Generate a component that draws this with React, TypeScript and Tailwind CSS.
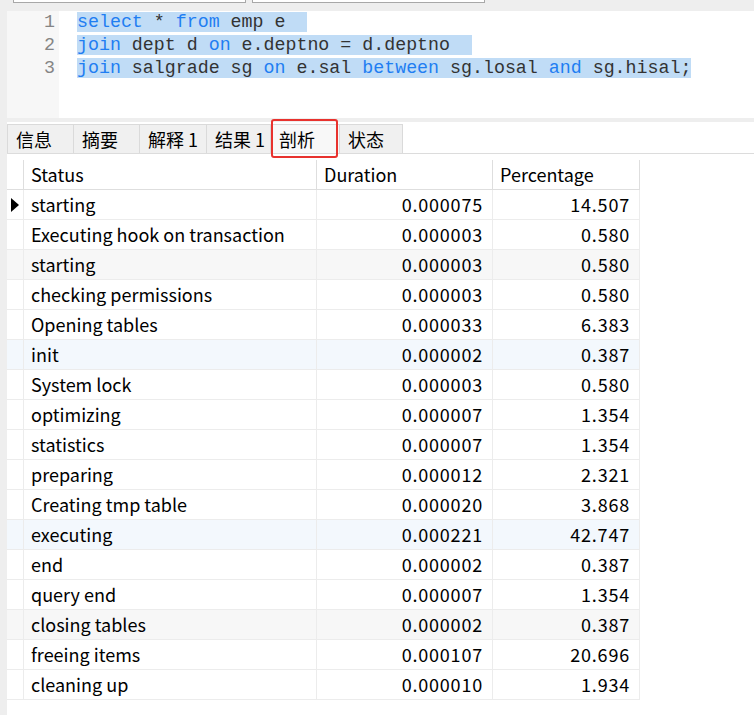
import React from "react";

const ROWS: { status: string; duration: string; pct: string; tint?: "gray" | "blue" }[] = [
  { status: "starting", duration: "0.000075", pct: "14.507" },
  { status: "Executing hook on transaction", duration: "0.000003", pct: "0.580" },
  { status: "starting", duration: "0.000003", pct: "0.580", tint: "gray" },
  { status: "checking permissions", duration: "0.000003", pct: "0.580" },
  { status: "Opening tables", duration: "0.000033", pct: "6.383" },
  { status: "init", duration: "0.000002", pct: "0.387", tint: "blue" },
  { status: "System lock", duration: "0.000003", pct: "0.580" },
  { status: "optimizing", duration: "0.000007", pct: "1.354" },
  { status: "statistics", duration: "0.000007", pct: "1.354" },
  { status: "preparing", duration: "0.000012", pct: "2.321" },
  { status: "Creating tmp table", duration: "0.000020", pct: "3.868" },
  { status: "executing", duration: "0.000221", pct: "42.747", tint: "blue" },
  { status: "end", duration: "0.000002", pct: "0.387" },
  { status: "query end", duration: "0.000007", pct: "1.354" },
  { status: "closing tables", duration: "0.000002", pct: "0.387", tint: "gray" },
  { status: "freeing items", duration: "0.000107", pct: "20.696" },
  { status: "cleaning up", duration: "0.000010", pct: "1.934" },
];

const TABS = [
  { label: "信息", w: "w-[67px]" },
  { label: "摘要", w: "w-[66px]" },
  { label: "解释 1", w: "w-[67px]" },
  { label: "结果 1", w: "w-[64px]" },
  { label: "剖析", w: "w-[69px]", active: true },
  { label: "状态", w: "w-[63px]" },
];

const K = ({ children }: { children: React.ReactNode }) => (
  <span className="text-[#1f7ef2]">{children}</span>
);

const UI_FONT = "font-['Noto_Sans_CJK_SC','Noto_Sans',sans-serif]";

export default function App() {
  return (
    <div className={`w-[754px] h-[715px] bg-white flex flex-col overflow-hidden ${UI_FONT}`}>
      {/* top toolbar remnants */}
      <div className="h-[11px] bg-[#eeeeee] flex gap-[6px] pl-[13px] shrink-0">
        <div className="w-[233px] h-[3px] bg-white border-x border-b border-[#a8a8a8]" />
        <div className="w-[233px] h-[3px] bg-white border-x border-b border-[#a8a8a8]" />
      </div>

      <div className="flex flex-1 min-h-0">
        <div className="w-[7px] bg-[#eeeeee] shrink-0" />

        <div className="flex-1 flex flex-col min-w-0">
          {/* SQL editor */}
          <div className="h-[107px] flex shrink-0 font-['Liberation_Mono',monospace] text-[18.3px] leading-[23px]">
            <div className="w-[52px] bg-[#f7f7f7] text-right pr-[4px] text-[#858585]">
              <div>1</div>
              <div>2</div>
              <div>3</div>
            </div>
            <div className="flex-1 pl-[18px] text-[#333333] whitespace-pre">
              <div>
                <span className="bg-[#c0dcf6]">
                  <K>select</K> * <K>from</K> emp e{"  "}
                </span>
              </div>
              <div>
                <span className="bg-[#c0dcf6]">
                  <K>join</K> dept d <K>on</K> e.deptno = d.deptno{"  "}
                </span>
              </div>
              <div>
                <span className="bg-[#c0dcf6]">
                  <K>join</K> salgrade sg <K>on</K> e.sal <K>between</K> sg.losal <K>and</K> sg.hisal;
                </span>
              </div>
            </div>
          </div>

          <div className="h-[4px] bg-[#eeeeee] shrink-0" />
          <div className="h-[2px] shrink-0" />

          {/* tabs */}
          <div className="relative flex h-[30px] border-b border-[#dcdcdc] shrink-0">
            {TABS.map((t) => (
              <div
                key={t.label}
                className={`${t.w} h-full flex items-center pl-[8px] text-[18px] text-black border-t border-r border-[#dadada] ${
                  t.active ? "bg-[#f8f8f8]" : "bg-[#f0f0f0]"
                } first:border-l`}
              >
                {t.label}
              </div>
            ))}
            <div className="absolute left-[264px] top-[-5px] w-[67px] h-[39px] border-2 border-[#e8322e] rounded-[3px]" />
          </div>

          <div className="h-[6px] shrink-0" />

          {/* profile table */}
          <div className="grid grid-cols-[17px_293px_176px_147px] text-[18px] text-black w-max">
            <div className="h-[30px] border-b border-r border-[#dedede]" />
            <div className="h-[30px] border-b border-r border-[#dedede] pl-[7px] flex items-center">Status</div>
            <div className="h-[30px] border-b border-r border-[#dedede] pl-[7px] flex items-center">Duration</div>
            <div className="h-[30px] border-b border-r border-[#dedede] pl-[7px] flex items-center">Percentage</div>

            {ROWS.map((r, i) => {
              const bg =
                r.tint === "gray" ? "bg-[#f7f7f7]" : r.tint === "blue" ? "bg-[#f3f8fd]" : "bg-white";
              return (
                <React.Fragment key={i}>
                  <div className={`h-[30px] border-b border-r border-[#ececec] flex items-center justify-center ${bg}`}>
                    {i === 0 && (
                      <svg width="8" height="14" viewBox="0 0 8 14">
                        <path d="M0 0 L8 7 L0 14 Z" fill="#000" />
                      </svg>
                    )}
                  </div>
                  <div className={`h-[30px] border-b border-r border-[#ececec] pl-[7px] flex items-center ${bg}`}>
                    {r.status}
                  </div>
                  <div className={`h-[30px] border-b border-r border-[#ececec] pr-[9px] tracking-[0.8px] flex items-center justify-end ${bg}`}>
                    {r.duration}
                  </div>
                  <div className={`h-[30px] border-b border-r border-[#ececec] pr-[9px] tracking-[0.8px] flex items-center justify-end ${bg}`}>
                    {r.pct}
                  </div>
                </React.Fragment>
              );
            })}
          </div>
        </div>
      </div>
    </div>
  );
}
